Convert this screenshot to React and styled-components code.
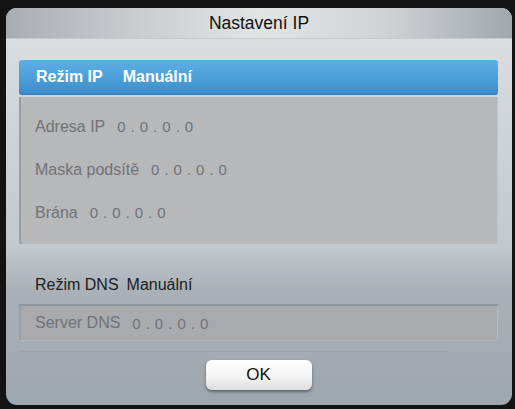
import styled, { createGlobalStyle } from "styled-components";

const Global = createGlobalStyle`
  html, body {
    margin: 0;
    padding: 0;
    background: #131313;
    font-family: "Liberation Sans", Arial, sans-serif;
  }
`;

const Screen = styled.div`
  width: 515px;
  height: 409px;
  padding: 8px 3px 4px 6px;
  box-sizing: border-box;
`;

const Dialog = styled.div`
  height: 100%;
  display: flex;
  flex-direction: column;
  border-radius: 11px;
  overflow: hidden;
  background: linear-gradient(
    to bottom,
    #e1e4e7 0px,
    #d6dadd 60px,
    #c3c8cd 240px,
    #aab1b8 280px,
    #9ea6ae 397px
  );
`;

const Header = styled.div`
  height: 30px;
  flex: none;
  display: flex;
  align-items: center;
  justify-content: center;
  background: linear-gradient(
    to right,
    #a9adb1 0%,
    #c9cccf 25%,
    #e2e4e4 50%,
    #d0d3d5 75%,
    #a2a7ad 100%
  );
  border-bottom: 1px solid #c5c9cc;
  font-size: 17.5px;
  color: #111;
`;

const Body = styled.div`
  flex: 1;
  display: flex;
  flex-direction: column;
  padding: 21px 14px 0 13px;
`;

const SelectedRow = styled.div`
  height: 35px;
  display: flex;
  align-items: center;
  gap: 20px;
  padding-left: 17px;
  border-radius: 3px;
  background: linear-gradient(to bottom, #5daee4 0%, #4a9fd9 55%, #3a8ccb 100%);
  border-bottom: 1px solid #3179b0;
  color: #fff;
  font-size: 16px;
  font-weight: bold;
  box-sizing: border-box;
`;

const Panel = styled.div`
  margin-top: ${(p) => (p.$center ? 0 : 2)}px;
  height: ${(p) => p.$height}px;
  display: flex;
  flex-direction: column;
  justify-content: ${(p) => (p.$center ? "center" : "flex-start")};
  padding-top: ${(p) => (p.$center ? 0 : 8)}px;
  padding-left: 14px;
  box-sizing: border-box;
  background: ${(p) => p.$bg};
  border-left: 2px solid #9b9ea2;
  border-bottom: 1px solid ${(p) => p.$edge};
  border-right: 1px solid ${(p) => p.$edge};
  border-radius: 0 0 4px 4px;
`;

const Field = styled.div`
  height: 43px;
  flex: none;
  display: flex;
  align-items: center;
  gap: 12px;
  font-size: 16px;
  color: #717376;
`;

const Value = styled.span`
  letter-spacing: 5px;
  font-size: 15px;
`;

const Section = styled.div`
  height: 39px;
  margin-top: 20px;
  display: flex;
  align-items: center;
  gap: 8px;
  padding-left: 16px;
  font-size: 16px;
  color: #1d1e20;
  border-bottom: 2px solid #8c949c;
`;

const Footer = styled.div`
  margin-top: 10px;
  display: flex;
  flex-direction: column;
  align-items: center;
  gap: 8px;
`;

const Divider = styled.div`
  align-self: stretch;
  margin-right: 50px;
  border-top: 1px solid #9aa2aa;
`;

const OkButton = styled.button`
  width: 106px;
  height: 30px;
  border: none;
  border-radius: 6px;
  background: linear-gradient(to bottom, #ffffff 0%, #f3f3f3 55%, #dedede 100%);
  box-shadow: 0 2px 3px rgba(40, 45, 55, 0.55);
  font-family: "Liberation Sans", Arial, sans-serif;
  font-size: 17px;
  color: #111;
  padding: 0;
`;

export default function App() {
  return (
    <Screen>
      <Global />
      <Dialog>
        <Header>Nastavení IP</Header>
        <Body>
          <SelectedRow>
            <span>Režim IP</span>
            <span>Manuální</span>
          </SelectedRow>
          <Panel $height={148} $bg="#b6b8ba" $edge="#c2c6ca">
            <Field>
              Adresa IP <Value>0.0.0.0</Value>
            </Field>
            <Field>
              Maska podsítě <Value>0.0.0.0</Value>
            </Field>
            <Field>
              Brána <Value>0.0.0.0</Value>
            </Field>
          </Panel>
          <Section>
            <span>Režim DNS</span>
            <span>Manuální</span>
          </Section>
          <Panel $height={35} $bg="#a9aaae" $edge="#b4b9be" $center>
            <Field>
              Server DNS <Value>0.0.0.0</Value>
            </Field>
          </Panel>
          <Footer>
            <Divider />
            <OkButton>OK</OkButton>
          </Footer>
        </Body>
      </Dialog>
    </Screen>
  );
}
